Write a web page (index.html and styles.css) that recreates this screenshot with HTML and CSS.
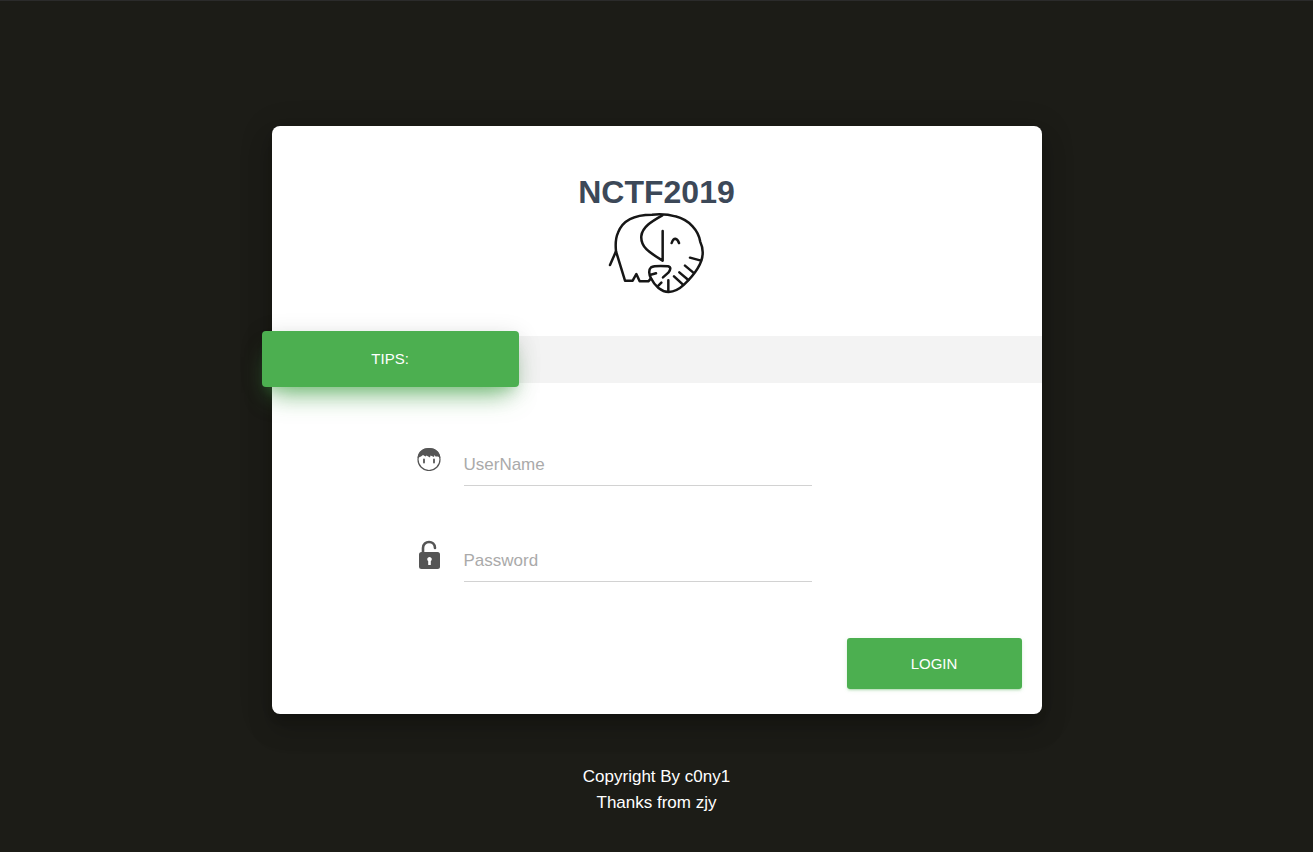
FILE: index.html
```html
<!DOCTYPE html>
<html lang="en">
<head>
<meta charset="utf-8">
<meta name="viewport" content="width=device-width, initial-scale=1">
<title>NCTF2019</title>
<link rel="stylesheet" href="styles.css">
</head>
<body>
<main class="page">
  <section class="card">
    <header class="card-header">
      <h1 class="title">NCTF2019</h1>
      <svg class="logo" viewBox="27 25 288 240" role="img" aria-label="Elephant">
        <path d="M30 181 L48 140 L75 228 H98 L109 208 L119 230 H145 L153 221"/>
        <path d="M48 140 C46 119 46 101 54 84 C67 48 103 30 156 30 C180 28 205 29 226 35 C269 46 296 78 301 112 Q309 129 308 147 C307 178 278 215 252 240 Q230 261 206 262 C184 261 164 244 153 221 C147 210 145 195 153 188 C163 183 188 184 204 185 C214 187 212 195 205 204 L189 218"/>
        <path d="M187 32 C155 50 127 67 124 94 C121 128 149 144 188 168 V79"/>
        <path d="M215 115 Q219 102 226 102 Q233 103 237 115 M270 159 L303 168 M255 183 L280 204 M238 203 L265 226 M222 215 L249 240 M205 227 V259 M184 234 L173 245 M152 210 L168 206"/>
      </svg>
    </header>

    <div class="tips-bar">
      <div class="tips">TIPS:</div>
    </div>

    <form class="form">
      <div class="field">
        <label class="field-icon" for="username" aria-label="UserName">
          <svg viewBox="0 0 24 24" width="24" height="24" aria-hidden="true">
            <circle class="face" cx="12" cy="12.500" r="11"/>
            <path class="solid" d="M0.600 11 C1 4 6 1 12 1 C18 1 23 4 23.400 11 L21 9.500 L18.500 9.500 L17.500 8 L17 10 L13.500 8.500 L13 10.500 L9.500 8.500 L8.500 9.500 L6 8 L4 9.500 Z"/>
            <path class="eye" d="M7 12.500 V15.500 M17 12.500 V15.500"/>
          </svg>
        </label>
        <input class="input" id="username" name="username" type="text" placeholder="UserName" autocomplete="username">
      </div>
      <div class="field">
        <label class="field-icon field-icon-lock" for="password" aria-label="Password">
          <svg viewBox="0 0 24 30" width="24" height="30" aria-hidden="true">
            <path class="shackle" d="M6 13 V8 C6 0 18 0 18 8"/>
            <rect class="solid" x="2" y="12" width="21" height="17" rx="2.500"/>
            <path class="keyhole" d="M12.500 17 a2.300 2.300 0 0 1 1.300 4.200 V25 h-2.600 V21.200 A2.300 2.300 0 0 1 12.500 17 Z"/>
          </svg>
        </label>
        <input class="input" id="password" name="password" type="password" placeholder="Password" autocomplete="current-password">
      </div>
      <div class="actions">
        <button class="login" type="button">LOGIN</button>
      </div>
    </form>
  </section>

  <footer class="footer">
    <p>Copyright By c0ny1</p>
    <p>Thanks from zjy</p>
  </footer>
</main>
</body>
</html>
```
FILE: styles.css
```css
* {
  box-sizing: border-box;
}

body {
  margin: 0;
  min-height: 100vh;
  border-top: 1px solid #2b2b2b;
  background: #1c1c17;
  color: #fff;
  font-family: "Liberation Sans", Arial, sans-serif;
  font-size: 17px;
  line-height: 26px;
}

.page {
  display: flex;
  flex-direction: column;
  align-items: center;
  padding: 125px 24px 36px;
}

.card {
  width: 100%;
  max-width: 770px;
  border-radius: 8px;
  background: #fff;
  box-shadow: 0 16px 24px 2px rgba(0, 0, 0, 0.14), 0 6px 30px 5px rgba(0, 0, 0, 0.12), 0 8px 10px -5px rgba(0, 0, 0, 0.2);
}

.card-header {
  display: flex;
  flex-direction: column;
  align-items: center;
  padding: 45px 24px 43px;
}

.title {
  margin: 0;
  color: #3c4858;
  font-size: 32px;
  font-weight: 700;
  line-height: 42px;
}

.logo {
  width: 96px;
  height: 80px;
  overflow: visible;
  fill: none;
  stroke: #161616;
  stroke-width: 7.5;
  stroke-linecap: round;
  stroke-linejoin: round;
}

.tips-bar {
  display: flex;
  align-items: flex-start;
  background: #f3f3f3;
}

.tips {
  flex: none;
  width: 33.4%;
  margin: -5px 0 -4px -10px;
  padding: 15px;
  border-radius: 4px;
  background: #4caf50;
  box-shadow: 0 16px 26px -10px rgba(76, 175, 80, 0.7), 0 4px 25px 0 rgba(0, 0, 0, 0.12), 0 8px 10px -5px rgba(76, 175, 80, 0.2);
  font-size: 15px;
  text-align: center;
}

.form {
  padding: 61px 20px 25px;
}

.field {
  display: flex;
  gap: 23px;
  width: 60%;
  max-width: 395px;
  margin: 0 auto 54px 125px;
}

.field-icon {
  flex: none;
  padding-top: 3px;
}

.field-icon-lock {
  padding-top: 0;
}

.field-icon svg {
  display: block;
}

.face {
  fill: #fff;
  stroke: #555;
  stroke-width: 1.2;
}

.solid {
  fill: #555;
}

.eye,
.shackle {
  fill: none;
  stroke: #555;
  stroke-width: 1.8;
  stroke-linecap: round;
}

.shackle {
  stroke-width: 2.6;
}

.keyhole {
  fill: #fff;
}

.input {
  flex: 1;
  min-width: 0;
  height: 42px;
  padding: 0;
  border: 0;
  border-bottom: 1px solid #d2d2d2;
  background: transparent;
  color: #555;
  font: inherit;
}

.input::placeholder {
  color: #aaa;
  opacity: 1;
}

.actions {
  display: flex;
  justify-content: flex-end;
  padding-top: 2px;
}

.login {
  width: 175px;
  padding: 13px 30px 12px;
  border: 0;
  border-radius: 3px;
  background: #4caf50;
  box-shadow: 0 2px 2px 0 rgba(76, 175, 80, 0.14), 0 3px 1px -2px rgba(76, 175, 80, 0.2), 0 1px 5px 0 rgba(76, 175, 80, 0.12);
  color: #fff;
  font-family: inherit;
  font-size: 15px;
  line-height: 26px;
}

.footer {
  padding-top: 50px;
  text-align: center;
}

.footer p {
  margin: 0;
}
```
